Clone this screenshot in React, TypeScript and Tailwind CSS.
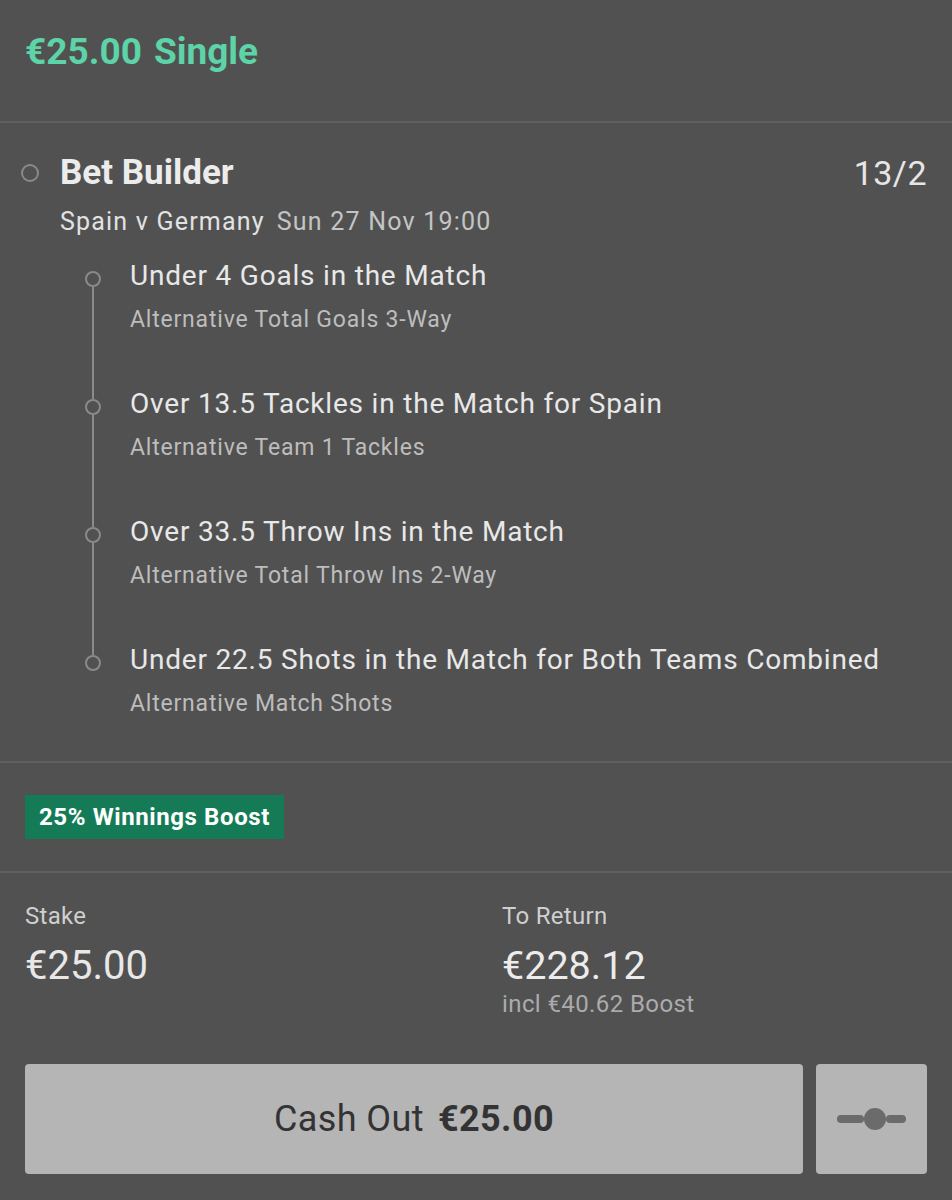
import React from "react";

const legs = [
  { title: "Under 4 Goals in the Match", market: "Alternative Total Goals 3-Way" },
  { title: "Over 13.5 Tackles in the Match for Spain", market: "Alternative Team 1 Tackles" },
  { title: "Over 33.5 Throw Ins in the Match", market: "Alternative Total Throw Ins 2-Way" },
  { title: "Under 22.5 Shots in the Match for Both Teams Combined", market: "Alternative Match Shots" },
];

function SliderIcon() {
  return (
    <svg width="70" height="26" viewBox="0 0 70 26" fill="#6b6b6b">
      <rect x="0" y="9" width="27" height="8" rx="4" />
      <circle cx="38" cy="13" r="11" />
      <rect x="49" y="9" width="20" height="8" rx="4" />
    </svg>
  );
}

export default function App() {
  return (
    <div
      className="w-[952px] h-[1200px] bg-[#515151] text-[#e8e8e8] overflow-hidden"
      style={{ fontFamily: "Roboto, 'Noto Sans', sans-serif" }}
    >
      {/* Header */}
      <div className="h-[123px] px-[25px] pt-[29px] border-b-2 border-[#5f5f5f]">
        <h1 className="text-[37px] leading-[46px] font-bold text-[#5dd3a8]">
          €25.00<span className="ml-[12px]">Single</span>
        </h1>
      </div>

      {/* Bet builder selections */}
      <div className="pt-[30px] pb-[41px] border-b-2 border-[#5f5f5f]">
        <div className="flex items-center pl-[21px] pr-[25px] h-[40px]">
          <div className="w-[18px] h-[18px] rounded-full border-2 border-[#8a8a8a]" />
          <div className="ml-[21px] text-[35px] font-bold text-[#ececec] flex-1">Bet Builder</div>
          <div className="text-[34px] tracking-[0.5px] text-[#e6e6e6]">13/2</div>
        </div>
        <div className="mt-[13px] pl-[60px] text-[25px] leading-[32px] tracking-[1.2px]">
          <span className="text-[#e2e2e2]">Spain v Germany</span>
          <span className="ml-[12px] text-[#c4c4c4]">Sun 27 Nov 19:00</span>
        </div>

        <div className="mt-[20px] pl-[85px]">
          {legs.map((leg, i) => (
            <div key={leg.title} className="flex">
              <div className="w-[16px] flex flex-col items-center">
                <div className={`w-[2px] h-[13px] ${i === 0 ? "" : "bg-[#8a8a8a]"}`} />
                <div className="w-[16px] h-[16px] rounded-full border-2 border-[#8a8a8a]" />
                <div className={`w-[2px] flex-1 ${i === legs.length - 1 ? "" : "bg-[#8a8a8a]"}`} />
              </div>
              <div className={`ml-[29px] ${i === legs.length - 1 ? "" : "pb-[50px]"}`}>
                <div className="text-[28px] leading-[36px] tracking-[0.8px] text-[#e8e8e8]">{leg.title}</div>
                <div className="mt-[10px] text-[23px] leading-[32px] tracking-[0.8px] text-[#bdbdbd]">{leg.market}</div>
              </div>
            </div>
          ))}
        </div>
      </div>

      {/* Boost */}
      <div className="px-[25px] py-[32px] border-b-2 border-[#5f5f5f]">
        <span className="inline-flex items-center h-[44px] px-[14px] bg-[#157b57] text-white text-[24px] tracking-[0.6px] font-bold">
          25% Winnings Boost
        </span>
      </div>

      {/* Stake / return */}
      <div className="px-[25px] pt-[28px] flex">
        <div className="w-[477px]">
          <div className="text-[24px] leading-[30px] tracking-[0.3px] text-[#cfcfcf]">Stake</div>
          <div className="mt-[12px] text-[40px] leading-[46px] text-[#e8e8e8]">€25.00</div>
        </div>
        <div>
          <div className="text-[24px] leading-[30px] tracking-[0.3px] text-[#cfcfcf]">To Return</div>
          <div className="mt-[12px] text-[39.5px] leading-[46px] text-[#ececec]">€228.12</div>
          <div className="text-[24px] leading-[30px] tracking-[0.4px] text-[#ababab]">incl €40.62 Boost</div>
        </div>
      </div>

      {/* Actions */}
      <div className="mt-[45px] px-[25px] flex gap-[13px]">
        <button className="w-[778px] h-[110px] rounded-[4px] bg-[#b5b5b5] flex items-center justify-center text-[36px] tracking-[0.4px] text-[#333333]">
          Cash Out<span className="ml-[14px] font-bold">€25.00</span>
        </button>
        <button className="w-[111px] h-[110px] rounded-[4px] bg-[#b5b5b5] flex items-center justify-center">
          <SliderIcon />
        </button>
      </div>
    </div>
  );
}
